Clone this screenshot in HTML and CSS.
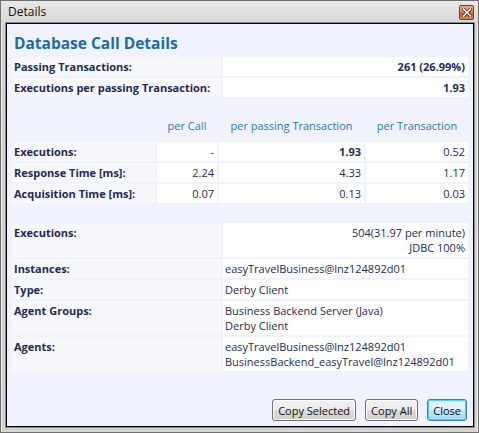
FILE: index.html
```html
<!DOCTYPE html>
<html>
<head>
<meta charset="utf-8">
<link rel="stylesheet" href="styles.css">
</head>
<body>
<div class="window">
  <div class="titlebar">
    <span class="title">Details</span>
    <span class="close-btn">
      <svg width="10" height="9" viewBox="0 0 10 9"><path d="M1.5 1 L8.5 8 M8.5 1 L1.5 8" stroke="#5a2a1c" stroke-width="3.2" stroke-linecap="square"/><path d="M1.5 1 L8.5 8 M8.5 1 L1.5 8" stroke="#ffffff" stroke-width="1.6" stroke-linecap="square"/></svg>
    </span>
  </div>
  <div class="frame">
    <div class="panel">
      <h1 class="heading">Database Call Details</h1>
      <div class="grid two">
        <div class="cell label">Passing Transactions:</div>
        <div class="cell value right bold">261 (26.99%)</div>
        <div class="cell label">Executions per passing Transaction:</div>
        <div class="cell value right bold">1.93</div>
      </div>
      <div class="grid four">
        <div class="head"></div>
        <div class="head">per Call</div>
        <div class="head">per passing Transaction</div>
        <div class="head">per Transaction</div>
        <div class="cell label">Executions:</div>
        <div class="cell value right">-</div>
        <div class="cell value right bold">1.93</div>
        <div class="cell value right">0.52</div>
        <div class="cell label">Response Time [ms]:</div>
        <div class="cell value right">2.24</div>
        <div class="cell value right">4.33</div>
        <div class="cell value right">1.17</div>
        <div class="cell label">Acquisition Time [ms]:</div>
        <div class="cell value right">0.07</div>
        <div class="cell value right">0.13</div>
        <div class="cell value right">0.03</div>
      </div>
      <div class="grid two third">
        <div class="cell label">Executions:</div>
        <div class="cell value right">504(31.97 per minute)<br>JDBC 100%</div>
        <div class="cell label">Instances:</div>
        <div class="cell value">easyTravelBusiness@lnz124892d01</div>
        <div class="cell label">Type:</div>
        <div class="cell value">Derby Client</div>
        <div class="cell label">Agent Groups:</div>
        <div class="cell value">Business Backend Server (Java)<br>Derby Client</div>
        <div class="cell label">Agents:</div>
        <div class="cell value">easyTravelBusiness@lnz124892d01<br>BusinessBackend_easyTravel@lnz124892d01</div>
      </div>
      <div class="buttons">
        <button class="btn">Copy Selected</button>
        <button class="btn">Copy All</button>
        <button class="btn default">Close</button>
      </div>
    </div>
  </div>
</div>
</body>
</html>
```

FILE: styles.css
```css
html, body {
  margin: 0;
  padding: 0;
  background: #d9d9d9;
}
body {
  font-family: "Open Sans", "DejaVu Sans", sans-serif;
  font-size: 11px;
}
.window {
  width: 479px;
  height: 433px;
  box-sizing: border-box;
  border: 1px solid #6e6e6e;
  background: #d4d4d4;
  display: flex;
  flex-direction: column;
}
.titlebar {
  height: 22px;
  display: flex;
  align-items: center;
  justify-content: space-between;
  padding: 0 4px 0 7px;
  background: linear-gradient(#e8e8e8, #d8d8d8);
}
.title {
  font-size: 12px;
  color: #111;
  position: relative;
  top: -1px;
}
.close-btn {
  width: 15px;
  height: 15px;
  box-sizing: border-box;
  border: 1px solid #6d3a2a;
  border-radius: 2px;
  background: linear-gradient(#e9a88e, #d98564 45%, #c05a36 55%, #d98a68);
  display: flex;
  align-items: center;
  justify-content: center;
  margin-top: 1px;
}
.frame {
  flex: 1;
  padding: 0 4px 5px 4px;
  border-left: 1px solid #f0f0f0;
  border-right: 1px solid #f0f0f0;
  display: flex;
}
.panel {
  flex: 1;
  border: 1px solid #000;
  outline: 1px solid #8a8a8a;
  background: #f0f3fe;
  padding: 9px 5px 5px 5px;
  display: flex;
  flex-direction: column;
  color: #242d55;
}
.heading {
  margin: 0 0 4px 2px;
  font-size: 15.5px;
  line-height: 20px;
  font-weight: bold;
  color: #1b6cad;
}
.grid {
  display: grid;
  gap: 2px;
}
.two {
  grid-template-columns: 209px 245px;
}
.four {
  grid-template-columns: 143px 60px 145px 102px;
  margin-top: 20px;
}
.third {
  margin-top: 20px;
}
.cell {
  padding: 2px 3px 2px 2px;
  line-height: 15px;
  white-space: nowrap;
}
.label {
  background: #f6f8fb;
  font-weight: bold;
  color: #1f2a55;
}
.value {
  background: #ffffff;
}
.right {
  text-align: right;
}
.bold {
  font-weight: bold;
}
.head {
  text-align: center;
  color: #2a78b8;
  line-height: 18px;
  padding-bottom: 5px;
}
.buttons {
  margin-top: auto;
  display: flex;
  justify-content: flex-end;
  gap: 9px;
  padding-right: 1px;
}
.btn {
  font-family: inherit;
  font-size: 11px;
  color: #111;
  height: 22px;
  padding: 0 5px;
  border: 1px solid #707070;
  border-radius: 3px;
  background: linear-gradient(#f2f2f2, #ebebeb 50%, #dddddd 50%, #cfcfcf);
  box-shadow: inset 0 0 0 1px #fcfcfc;
}
.btn.default {
  border-color: #3c7fb1;
  background: linear-gradient(#eaf6fd, #d9f0fc 50%, #bee6fd 50%, #a7d9f5);
  box-shadow: inset 0 0 0 1px #48d4ff;
}
```
